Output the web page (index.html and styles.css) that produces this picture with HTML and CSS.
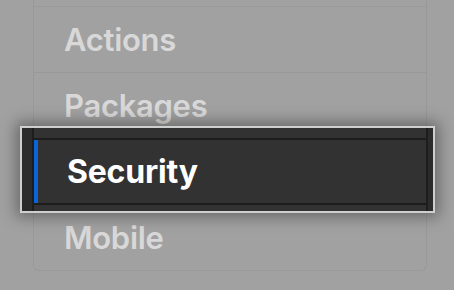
FILE: index.html
```html
<!DOCTYPE html>
<html>
<head>
<meta charset="utf-8">
<link rel="stylesheet" href="styles.css">
</head>
<body>
<div class="stage">
  <ul class="menu">
    <li class="menu-item">Actions</li>
    <li class="menu-item">Packages</li>
    <li class="menu-item">Security</li>
    <li class="menu-item">Mobile</li>
  </ul>
  <div class="callout">
    <div class="callout-col">
      <div class="callout-edge callout-edge-top"></div>
      <div class="callout-item">
        <span class="callout-bar"></span>
        <span class="callout-text">Security</span>
      </div>
      <div class="callout-edge callout-edge-bottom"></div>
    </div>
  </div>
</div>
</body>
</html>
```
FILE: styles.css
```css
html, body {
  margin: 0;
  padding: 0;
  background: #a1a1a1;
  width: 454px;
  height: 290px;
  overflow: hidden;
  font-family: Inter, "Liberation Sans", sans-serif;
}
.stage {
  position: relative;
  width: 454px;
  height: 290px;
}
.menu {
  list-style: none;
  margin: 0 0 0 33px;
  padding: 6px 0 0 0;
  width: 392px;
  border: 1px solid #999999;
  border-top: 0;
  border-radius: 0 0 6px 6px;
}
.menu-item {
  height: 65px;
  border-top: 1px solid #999999;
  display: flex;
  align-items: center;
  padding-left: 30px;
  font-size: 31px;
  font-weight: 600;
  color: #d8d8d8;
  letter-spacing: -0.3px;
}
.callout {
  position: absolute;
  left: 20px;
  top: 126px;
  box-sizing: border-box;
  width: 415px;
  height: 87px;
  border: 2px solid #cfcfcf;
  background: #2b2b2b;
  padding: 0 5px 0 10px;
  box-shadow: 0 0 14px 4px rgba(0, 0, 0, 0.35);
}
.callout-col {
  height: 83px;
  border-left: 2px solid #1d1d1d;
  border-right: 2px solid #1d1d1d;
  background: #323232;
  display: flex;
  flex-direction: column;
}
.callout-edge-top {
  height: 10px;
  border-bottom: 2px solid #1d1d1d;
}
.callout-item {
  height: 63px;
  display: flex;
  align-items: center;
}
.callout-bar {
  width: 4px;
  align-self: stretch;
  background: #0a66d8;
}
.callout-text {
  margin-left: 29px;
  font-size: 32px;
  font-weight: 700;
  color: #ffffff;
  letter-spacing: -0.2px;
}
.callout-edge-bottom {
  height: 6px;
  border-top: 2px solid #1d1d1d;
}
```
